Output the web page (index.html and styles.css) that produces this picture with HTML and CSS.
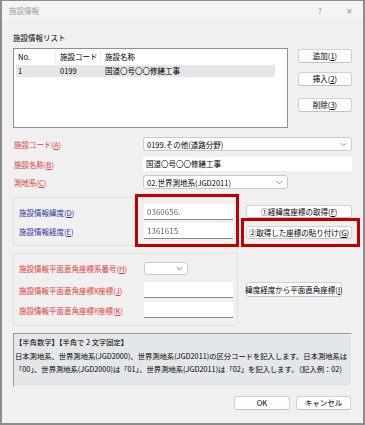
FILE: index.html
```html
<!DOCTYPE html>
<html lang="ja">
<head>
<meta charset="utf-8">
<title>施設情報</title>
<link rel="stylesheet" href="styles.css">
</head>
<body>
<div class="win">
  <header class="titlebar">
    <span class="title">施設情報</span>
    <span class="tb-q">?</span>
    <span class="tb-x">✕</span>
  </header>
  <main class="content">
    <div class="sec-label">施設情報リスト</div>
    <div class="list-row">
      <div class="list">
        <div class="list-head">
          <span class="c1">No.</span><span class="c2">施設コード</span><span class="c3">施設名称</span>
        </div>
        <div class="list-item">
          <span class="c1">1</span><span class="c2">0199</span><span class="c3">国道〇号〇〇修繕工事</span>
        </div>
      </div>
      <div class="list-btns">
        <button class="btn b-add">追加(<u>1</u>)</button>
        <button class="btn b-ins">挿入(<u>2</u>)</button>
        <button class="btn b-del">削除(<u>3</u>)</button>
      </div>
    </div>

    <div class="frow r-a">
      <span class="lbl red">施設コード(<u>A</u>)</span>
      <div class="select sel-a"><span>0199.その他(道路分野)</span><svg class="chev" viewBox="0 0 8 5"><polyline points="1,1 4,4 7,1"/></svg></div>
    </div>
    <div class="frow r-b">
      <span class="lbl red">施設名称(<u>B</u>)</span>
      <div class="textbox tb-name">国道〇号〇〇修繕工事</div>
    </div>
    <div class="frow r-c">
      <span class="lbl red">測地系(<u>C</u>)</span>
      <div class="select sel-c"><span>02.世界測地系(JGD2011)</span><svg class="chev" viewBox="0 0 8 5"><polyline points="1,1 4,4 7,1"/></svg></div>
    </div>

    <div class="coord">
      <div class="group g1">
        <div class="grow gr-d">
          <span class="lbl blue">施設情報緯度(<u>D</u>)</span>
          <div class="field"><span class="blur">0360656.</span></div>
        </div>
        <div class="grow gr-e">
          <span class="lbl blue">施設情報経度(<u>E</u>)</span>
          <div class="field"><span class="blur">1361615</span></div>
        </div>
      </div>
      <div class="side-btns">
        <button class="btn b-f">①経緯度座標の取得(<u>F</u>)</button>
        <button class="btn b-g">②取得した座標の貼り付け(<u>G</u>)</button>
      </div>
      <div class="mark mark-1"></div>
      <div class="mark mark-2"></div>
    </div>

    <div class="plane">
      <div class="group g2">
        <div class="grow gr-h">
          <span class="lbl red">施設情報平面直角座標系番号(<u>H</u>)</span>
          <div class="select sel-h"><svg class="chev" viewBox="0 0 8 5"><polyline points="1,1 4,4 7,1"/></svg></div>
        </div>
        <div class="grow gr-j">
          <span class="lbl red">施設情報平面直角座標X座標(<u>J</u>)</span>
          <div class="field"></div>
        </div>
        <div class="grow gr-k">
          <span class="lbl red">施設情報平面直角座標Y座標(<u>K</u>)</span>
          <div class="field"></div>
        </div>
      </div>
      <div class="side-btns2">
        <button class="btn b-i">緯度経度から平面直角座標(<u>I</u>)</button>
      </div>
    </div>

    <div class="helpbox">
      <div class="hl">【半角数字】【半角で 2 文字固定】</div>
      <div class="hl">日本測地系、世界測地系(JGD2000)、世界測地系(JGD2011)の区分コードを記入します。日本測地系は</div>
      <div class="hl">「00」、世界測地系(JGD2000)は「01」、世界測地系(JGD2011)は「02」を記入します。（記入例：02)</div>
    </div>

    <footer class="footer">
      <button class="btn b-ok">OK</button>
      <button class="btn b-cancel">キャンセル</button>
    </footer>
  </main>
</div>
</body>
</html>
```
FILE: styles.css
```css
* { box-sizing: border-box; }
html, body { margin: 0; padding: 0; background: #ffffff; }

.win {
  width: 365px;
  height: 425px;
  border: 2px solid #8c8c8c;
  border-top-width: 1px;
  background: #f0f0f0;
  font-family: "Noto Sans CJK JP", "Noto Sans", sans-serif;
  font-size: 7.5px;
  color: #000;
  display: flex;
  flex-direction: column;
}

.titlebar {
  height: 20px;
  background: #f4f4f4;
  display: flex;
  align-items: center;
  padding-left: 7px;
  color: #a0a0a0;
  font-size: 7.5px;
  border-bottom: 1px solid #ececec;
}
.title { flex: 1; }
.tb-q { width: 10px; text-align: center; margin-right: 19px; font-size: 8px; color: #9a9a9a; }
.tb-x { width: 10px; text-align: center; margin-right: 9px; font-size: 8px; color: #9a9a9a; }

.content {
  flex: 1;
  padding: 0 11px 0 11px;
  display: flex;
  flex-direction: column;
}

.sec-label { margin-top: 12px; height: 10px; line-height: 10px; }

.list-row { display: flex; margin-top: 5px; height: 80px; }
.list {
  width: 275px;
  height: 80px;
  background: #fff;
  border: 1px solid #8e9096;
  padding: 1px 0 0 2px;
}
.list-head, .list-item { display: flex; width: 259px; }
.list-head { height: 14px; line-height: 14px; background: #fff; }
.list-head span { border-right: 1px solid #ececec; }
.list-item { height: 12px; line-height: 12px; background: #e6e6e6; margin-top: 1px; }
.c1 { width: 40px; padding-left: 2px; }
.c2 { width: 45px; padding-left: 4px; }
.c3 { flex: 1; padding-left: 4px; }
.list-head .c3 { border-right: none; }

.list-btns { display: flex; flex-direction: column; margin-left: 10px; }
.btn {
  font: inherit;
  color: #000;
  background: #fdfdfd;
  border: 1px solid #d2d2d2;
  border-bottom-color: #c2c2c2;
  border-radius: 3px;
  height: 14px;
  padding: 0;
  display: flex;
  align-items: center;
  justify-content: center;
  line-height: 1;
  white-space: nowrap;
}
.b-add, .b-ins, .b-del { width: 54px; }
.b-add { margin-top: 1px; }
.b-ins { margin-top: 9px; }
.b-del { margin-top: 12px; }

.frow { display: flex; align-items: center; height: 14px; }
.r-a { margin-top: 9px; }
.r-b { margin-top: 6px; }
.r-c { margin-top: 4px; }
.lbl { white-space: nowrap; }
.frow .lbl { width: 130px; padding-left: 1px; }
.red { color: #e23a36; }
.blue { color: #2e33a8; }

.select {
  height: 14px;
  background: #fff;
  border: 1px solid #c9c9c9;
  border-radius: 3px;
  display: flex;
  align-items: center;
  padding-left: 3px;
  padding-right: 4px;
}
.select span { flex: 1; }
.chev { width: 7px; height: 5px; margin-left: auto; }
.chev polyline { fill: none; stroke: #7a7a7a; stroke-width: 1; }
.sel-a { width: 209px; }
.sel-c { width: 145px; }
.tb-name { width: 209px; height: 14px; background: #fff; padding-left: 3px; line-height: 14px; }

.coord { position: relative; display: flex; margin-top: 8px; height: 49px; }
.group {
  border: 1px solid #e2e2e2;
  border-radius: 2px;
  width: 225px;
  padding-left: 5px;
}
.g1 { height: 49px; padding-top: 6px; }
.grow { display: flex; align-items: center; }
.grow .lbl { width: 125px; }
.g1 .grow { height: 16px; }
.gr-e { margin-top: 3px; }
.field {
  width: 89px;
  height: 16px;
  background: #fff;
  border-bottom: 1px solid #8a8a8a;
  padding-left: 3px;
  display: flex;
  align-items: center;
}
.blur { color: #666; filter: blur(0.75px); font-size: 8px; }

.side-btns { display: flex; flex-direction: column; margin-left: 8px; }
.b-f, .b-g { width: 106px; height: 13px; }
.b-f { margin-top: 8px; }
.b-g { margin-top: 8px; }

.mark { position: absolute; border: 3px solid #c00000; }
.mark-1 { left: 122px; top: -3px; width: 104px; height: 53px; }
.mark-2 { left: 228px; top: 21px; width: 119px; height: 29px; }

.plane { display: flex; margin-top: 7px; height: 73px; }
.g2 { height: 73px; padding-top: 8px; }
.g2 .grow .lbl { width: 125px; }
.gr-h { height: 13px; }
.sel-h { width: 44px; height: 13px; }
.gr-j { margin-top: 7px; height: 16px; }
.gr-k { margin-top: 4px; height: 16px; }
.side-btns2 { margin-left: 8px; padding-top: 29px; }
.b-i { width: 96px; height: 15px; }

.helpbox {
  margin-top: 7px;
  height: 54px;
  width: 339px;
  background: #e3e7e9;
  border-top: 1px solid #9a9a9a;
  border-left: 1px solid #9a9a9a;
  border-right: 1px solid #f4f4f4;
  border-bottom: 1px solid #f4f4f4;
  padding: 2px 0 0 1px;
  font-size: 7.3px;
}
.hl { height: 13.5px; line-height: 13.5px; white-space: nowrap; }

.footer { display: flex; justify-content: flex-end; margin-top: 9px; padding-right: 1px; }
.b-ok { width: 56px; }
.b-cancel { width: 55px; margin-left: 6px; }
```
